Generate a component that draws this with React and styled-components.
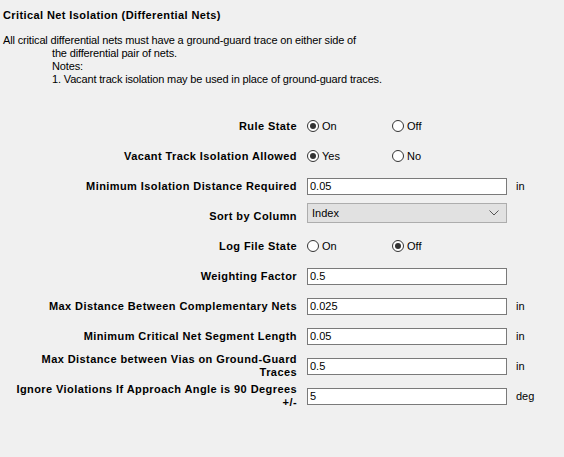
import styled, { createGlobalStyle } from "styled-components";

const GlobalStyle = createGlobalStyle`
  html, body {
    margin: 0;
    padding: 0;
    background: #f0f0f0;
  }
  body {
    font-family: "Liberation Sans", Arial, sans-serif;
    font-size: 11px;
    color: #000000;
  }
`;

const rows = [
  { type: "radio", label: ["Rule State"], options: ["On", "Off"], checked: 0 },
  { type: "radio", label: ["Vacant Track Isolation Allowed"], options: ["Yes", "No"], checked: 0 },
  { type: "input", label: ["Minimum Isolation Distance Required"], value: "0.05", unit: "in" },
  { type: "select", label: ["Sort by Column"], value: "Index" },
  { type: "radio", label: ["Log File State"], options: ["On", "Off"], checked: 1 },
  { type: "input", label: ["Weighting Factor"], value: "0.5" },
  { type: "input", label: ["Max Distance Between Complementary Nets"], value: "0.025", unit: "in" },
  { type: "input", label: ["Minimum Critical Net Segment Length"], value: "0.05", unit: "in" },
  { type: "input", label: ["Max Distance between Vias on Ground-Guard", "Traces"], value: "0.5", unit: "in" },
  { type: "input", label: ["Ignore Violations If Approach Angle is 90 Degrees", "+/-"], value: "5", unit: "deg" },
];

function RadioGroup({ options, checked }) {
  return (
    <Radios>
      {options.map((opt, i) => (
        <RadioOption key={opt}>
          <RadioCircle $checked={i === checked} />
          {opt}
        </RadioOption>
      ))}
    </Radios>
  );
}

function Control({ row }) {
  if (row.type === "radio") {
    return <RadioGroup options={row.options} checked={row.checked} />;
  }
  if (row.type === "select") {
    return (
      <Select>
        <span>{row.value}</span>
        <svg width="10" height="6" viewBox="0 0 10 6">
          <path d="M0.5 0.5 L5 5 L9.5 0.5" fill="none" stroke="#555" strokeWidth="1" />
        </svg>
      </Select>
    );
  }
  return <TextBox>{row.value}</TextBox>;
}

export default function App() {
  return (
    <>
      <GlobalStyle />
      <Page>
        <Title>Critical Net Isolation (Differential Nets)</Title>
        <Description>
          <div>All critical differential nets must have a ground-guard trace on either side of</div>
          <Indented>
            <div>the differential pair of nets.</div>
            <div>Notes:</div>
            <div>1. Vacant track isolation may be used in place of ground-guard traces.</div>
          </Indented>
        </Description>
        <Form>
          {rows.map((row, i) => (
            <Row key={i}>
              <Label>
                {row.label.map((line, j) => (
                  <div key={j}>{line}</div>
                ))}
              </Label>
              <Control row={row} />
              <Unit>{row.unit}</Unit>
            </Row>
          ))}
        </Form>
      </Page>
    </>
  );
}

const Page = styled.div`
  width: 564px;
  height: 457px;
  padding: 9px 0 0 3px;
  box-sizing: border-box;
  overflow: hidden;
`;

const Title = styled.div`
  font-weight: 700;
  letter-spacing: 0.4px;
  line-height: 13px;
`;

const Description = styled.div`
  margin-top: 12px;
  line-height: 13px;
  letter-spacing: -0.15px;
`;

const Indented = styled.div`
  padding-left: 49px;
`;

const Form = styled.div`
  margin-top: 25px;
  display: flex;
  flex-direction: column;
`;

const Row = styled.div`
  display: grid;
  grid-template-columns: 290px 200px 40px;
  column-gap: 10px;
  align-items: center;
  height: 30px;
  margin-left: 4px;
`;

const Label = styled.div`
  font-weight: 700;
  letter-spacing: 0.42px;
  text-align: right;
  white-space: nowrap;
  line-height: 13px;
`;

const Unit = styled.div`
  margin-left: -1px;
`;

const Radios = styled.div`
  display: flex;
  align-items: center;
`;

const RadioOption = styled.label`
  display: flex;
  align-items: center;
  gap: 3px;
  width: 85px;
`;

const RadioCircle = styled.span`
  width: 12px;
  height: 12px;
  box-sizing: border-box;
  border: 1px solid #333333;
  border-radius: 50%;
  background: #ffffff;
  display: flex;
  align-items: center;
  justify-content: center;
  &::after {
    content: "";
    width: 6px;
    height: 6px;
    border-radius: 50%;
    background: ${(p) => (p.$checked ? "#333333" : "transparent")};
  }
`;

const TextBox = styled.div`
  height: 17px;
  box-sizing: border-box;
  border: 1px solid #7a7a7a;
  background: #ffffff;
  padding: 0 2px;
  line-height: 15px;
`;

const Select = styled.div`
  height: 20px;
  margin-bottom: 6px;
  box-sizing: border-box;
  border: 1px solid #adadad;
  background: #e1e1e1;
  padding: 0 7px 0 4px;
  display: flex;
  align-items: center;
  justify-content: space-between;
`;
